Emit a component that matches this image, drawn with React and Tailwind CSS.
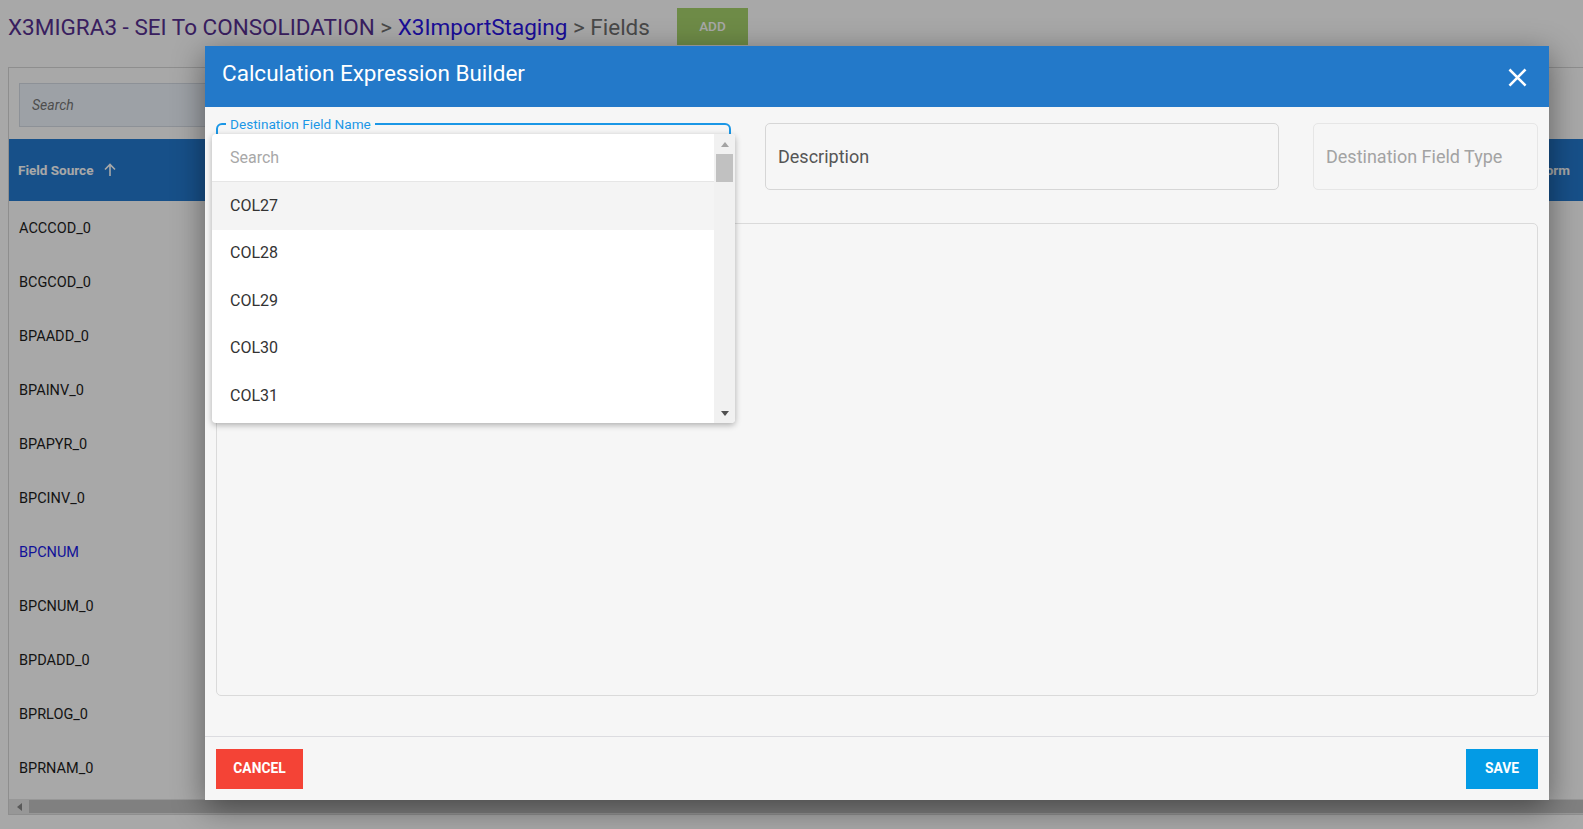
const rows = [
  "ACCCOD_0",
  "BCGCOD_0",
  "BPAADD_0",
  "BPAINV_0",
  "BPAPYR_0",
  "BPCINV_0",
  "BPCNUM",
  "BPCNUM_0",
  "BPDADD_0",
  "BPRLOG_0",
  "BPRNAM_0",
];

const options = ["COL27", "COL28", "COL29", "COL30", "COL31"];

function CloseIcon() {
  return (
    <svg width="19" height="19" viewBox="0 0 20 20" className="text-white">
      <path
        d="M2.5 2.5 L17.5 17.5 M17.5 2.5 L2.5 17.5"
        stroke="currentColor"
        strokeWidth="2.7"
        strokeLinecap="square"
      />
    </svg>
  );
}

function FieldDropdown() {
  return (
    <div className="absolute left-[-6px] top-[9px] w-[523px] h-[289px] bg-white rounded-sm shadow-[0_2px_6px_rgba(0,0,0,0.3)] flex z-20">
      <div className="flex-1 flex flex-col">
        <div className="h-[48px] shrink-0 border-b border-[#e6e6e6] flex items-center px-[18px] text-[16px] text-[#a8a8a8]">
          Search
        </div>
        {options.map((o, i) => (
          <div
            key={o}
            className={
              "h-[47.5px] shrink-0 flex items-center px-[18px] text-[16px] text-[#333] " +
              (i === 0 ? "bg-[#f4f4f4]" : "bg-white")
            }
          >
            {o}
          </div>
        ))}
      </div>
      {/* scrollbar */}
      <div className="w-[21px] bg-[#f1f1f1] flex flex-col items-center rounded-r-sm">
        <div className="h-[20px] flex items-center justify-center">
          <svg width="8" height="5" viewBox="0 0 8 5">
            <path d="M0 5 L4 0 L8 5 Z" fill="#a3a3a3" />
          </svg>
        </div>
        <div className="w-[17px] h-[28px] bg-[#c1c1c1]" />
        <div className="flex-1" />
        <div className="h-[20px] flex items-center justify-center">
          <svg width="8" height="5" viewBox="0 0 8 5">
            <path d="M0 0 L4 5 L8 0 Z" fill="#505050" />
          </svg>
        </div>
      </div>
    </div>
  );
}

function Modal() {
  return (
    <div className="absolute left-[205px] top-[46px] w-[1344px] h-[754px] bg-[#f6f6f6] shadow-[0_8px_30px_rgba(0,0,0,0.45)] flex flex-col z-10">
      <div className="h-[61px] shrink-0 bg-[#2379c9] flex items-center justify-between pl-[17px] pr-[22px]">
        <h2 className="text-white text-[22.5px] pb-[6px]">Calculation Expression Builder</h2>
        <button className="mt-[2px]">
          <CloseIcon />
        </button>
      </div>

      <div className="flex-1 flex flex-col px-[11px] pt-[16px]">
        <div className="grid grid-cols-[515px_514px_1fr] gap-x-[34px]">
          <div className="relative h-[67px] border-2 border-[#1b97e6] rounded-[6px]">
            <span className="absolute left-[8px] -top-[9px] bg-[#f6f6f6] px-[4px] text-[13.6px] leading-[16px] text-[#1b97e6]">
              Destination Field Name
            </span>
            <FieldDropdown />
          </div>
          <div className="h-[67px] border border-[#d6d6d6] rounded-[5px] flex items-center px-[12px] text-[18px] text-[#555]">
            Description
          </div>
          <div className="h-[67px] border border-[#e6e6e6] rounded-[5px] flex items-center px-[12px] text-[18px] text-[#a3a3a3]">
            Destination Field Type
          </div>
        </div>

        <div className="mt-[33px] h-[473px] border border-[#dadada] rounded-[5px]" />
      </div>

      <div className="h-[64px] shrink-0 border-t border-[#dcdce0] flex items-center justify-between px-[11px]">
        <button className="h-[40px] w-[87px] bg-[#f44336] text-white text-[13.8px] font-bold">
          CANCEL
        </button>
        <button className="h-[40px] w-[72px] bg-[#039be5] text-white text-[13.8px] font-bold">
          SAVE
        </button>
      </div>
    </div>
  );
}

export default function App() {
  return (
    <div className="relative h-[829px] w-full overflow-hidden bg-white font-['Roboto','Liberation_Sans',sans-serif]">
      {/* page behind the dialog */}
      <div className="flex items-start h-[57px] pl-[8px] gap-[27px]">
        <div className="text-[22.5px] leading-none pt-[16px]">
          <span className="text-[#573091]">X3MIGRA3 - SEI To CONSOLIDATION</span>
          <span className="text-[#6f6f6f]"> &gt; </span>
          <span className="text-[#2a14e6]">X3ImportStaging</span>
          <span className="text-[#6f6f6f]"> &gt; Fields</span>
        </div>
        <button className="h-[37px] w-[71px] mt-[8px] bg-[#a7d46c] text-white text-[13.5px] font-medium">
          ADD
        </button>
      </div>

      <div className="ml-[8px] mt-[10px] w-[1600px] h-[748px] border border-[#d8d8d8] flex flex-col">
        <div className="px-[10px] pt-[15px] pb-[12px]">
          <div className="h-[44px] w-[520px] border border-[#d6dde6] bg-[#eff5fc] flex items-center px-[12px] text-[14px] italic text-[#777]">
            Search
          </div>
        </div>
        <div className="h-[62px] shrink-0 bg-[#237ad0] flex items-center justify-between pl-[9px] pr-[37px] text-white text-[13.5px] font-bold">
          <div className="flex items-center gap-[11px]">
            <span>Field Source</span>
            <svg width="12" height="14" viewBox="0 0 12 14">
              <path d="M6 13 V2 M1 6.5 L6 1.5 L11 6.5" stroke="currentColor" strokeWidth="1.6" fill="none" />
            </svg>
          </div>
          <span>Transform</span>
        </div>
        <div className="flex-1 overflow-hidden">
          {rows.map((r) => (
            <div
              key={r}
              className={
                "h-[54px] flex items-center px-[10px] pt-[2px] text-[14.5px] " +
                (r === "BPCNUM" ? "text-[#1a1ae8]" : "text-[#1d1d1d]")
              }
            >
              {r}
            </div>
          ))}
        </div>
        <div className="h-[15px] shrink-0 bg-[#e6e6e6] flex items-center">
          <div className="w-[20px] flex justify-center">
            <svg width="5" height="8" viewBox="0 0 5 8">
              <path d="M5 0 L0 4 L5 8 Z" fill="#888" />
            </svg>
          </div>
          <div className="flex-1 h-[13px] bg-[#c2c2c2]" />
        </div>
      </div>

      {/* dim overlay */}
      <div className="absolute inset-0 bg-black/[0.34]" />

      <Modal />
    </div>
  );
}
